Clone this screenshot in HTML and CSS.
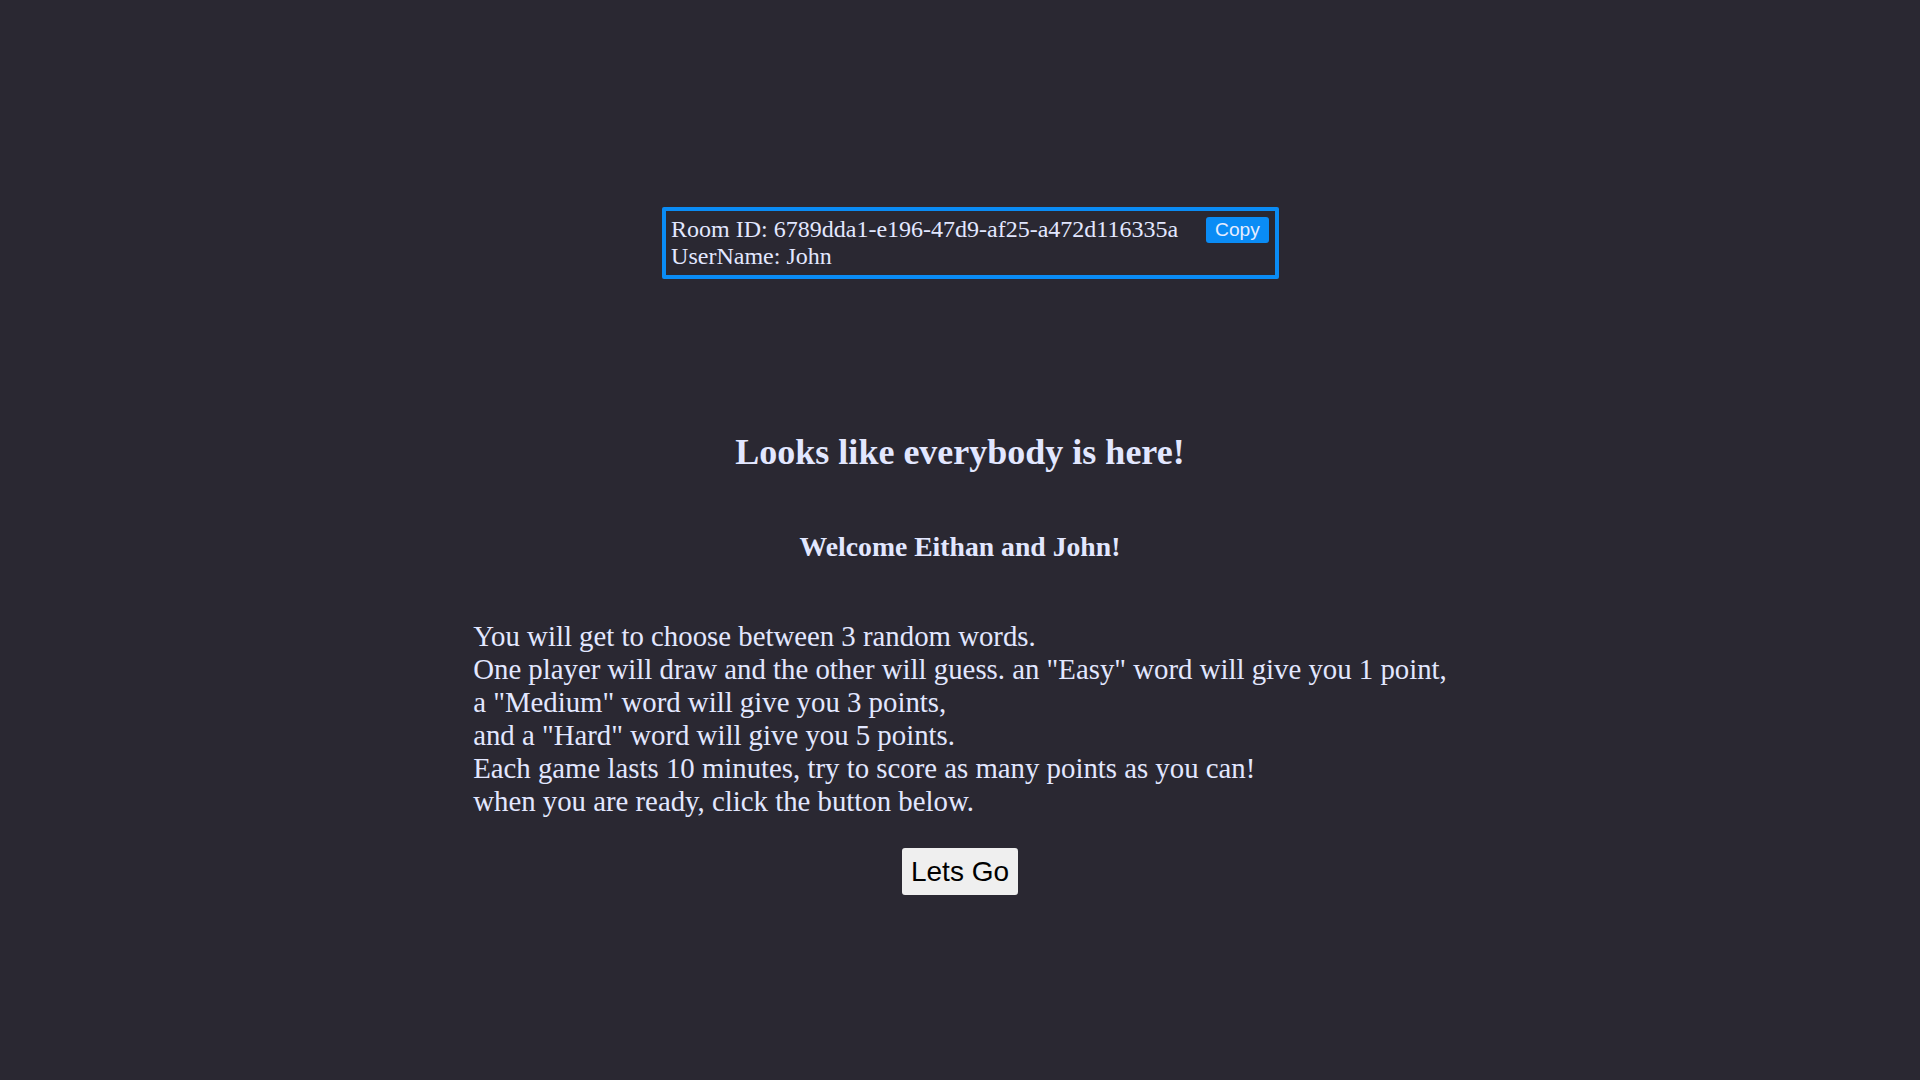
FILE: index.html
```html
<!DOCTYPE html>
<html lang="en">
<head>
<meta charset="utf-8">
<title>Lobby</title>
<link rel="stylesheet" href="styles.css">
</head>
<body>
<main class="page">
  <div class="room-row">
    <div class="room-box">
      <div class="room-info">
        <div class="room-line">Room ID: 6789dda1-e196-47d9-af25-a472d116335a</div>
        <div class="room-line">UserName: John</div>
      </div>
      <button class="copy-btn">Copy</button>
    </div>
  </div>
  <h1 class="title">Looks like everybody is here!</h1>
  <h2 class="welcome">Welcome Eithan and John!</h2>
  <p class="rules">You will get to choose between 3 random words.<br>One player will draw and the other will guess. an "Easy" word will give you 1 point,<br>a "Medium" word will give you 3 points,<br>and a "Hard" word will give you 5 points.<br>Each game lasts 10 minutes, try to score as many points as you can!<br>when you are ready, click the button below.</p>
  <button class="go-btn">Lets Go</button>
</main>
</body>
</html>
```

FILE: styles.css
```css
html, body {
  margin: 0;
  padding: 0;
  height: 100%;
}
body {
  background: #2a2832;
  color: #e2e7ff;
  font-family: "Liberation Serif", "Times New Roman", serif;
}
.page {
  display: flex;
  flex-direction: column;
  align-items: center;
  padding-top: 207px;
}
.room-row {
  display: flex;
  justify-content: center;
  width: 100%;
  padding-left: 21px;
  box-sizing: border-box;
}
.room-box {
  display: flex;
  align-items: flex-start;
  border: 4px solid #0a8cf5;
  border-radius: 2px;
  padding: 5px 6px 5px 5px;
}
.room-line {
  font-size: 24px;
  line-height: 27px;
  white-space: nowrap;
}
.copy-btn {
  margin: 1px 0 0 28px;
  background: #0a8cf5;
  color: #e6ecff;
  border: none;
  border-radius: 3px;
  font-family: "Liberation Sans", Arial, sans-serif;
  font-size: 19.2px;
  line-height: 22px;
  padding: 2px 9px;
}
.title {
  margin: 152px 0 0;
  font-size: 36px;
  line-height: 42px;
  font-weight: bold;
  text-align: center;
}
.welcome {
  margin: 58px 0 0;
  font-size: 27.7px;
  line-height: 32px;
  font-weight: bold;
  text-align: center;
}
.rules {
  margin: 57px 0 0;
  font-size: 28.8px;
  line-height: 33.1px;
  text-align: left;
  white-space: nowrap;
}
.go-btn {
  margin-top: 29px;
  background: #efefef;
  color: #000;
  border: none;
  border-radius: 3px;
  font-family: "Liberation Sans", Arial, sans-serif;
  font-size: 28px;
  line-height: 33px;
  padding: 7px 9px;
}
```
